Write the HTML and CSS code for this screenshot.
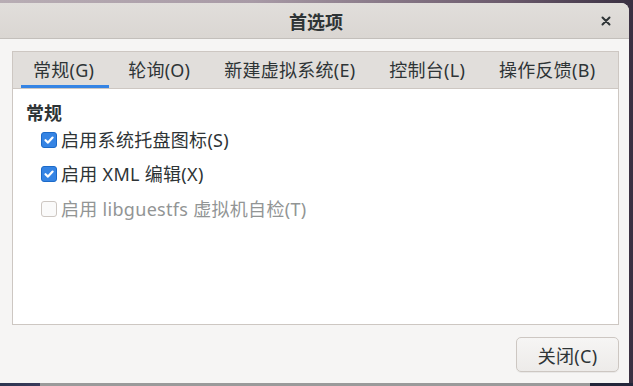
FILE: index.html
```html
<!DOCTYPE html>
<html lang="zh">
<head>
<meta charset="utf-8">
<title>首选项</title>
<link rel="stylesheet" href="styles.css">
</head>
<body>
<div class="desktop">
  <div class="dialog">
    <div class="titlebar">
      <span class="title">首选项</span>
      <span class="close" aria-label="关闭">
        <svg width="10" height="10" viewBox="0 0 10 10"><path d="M1.5 1.5 L8.5 8.5 M8.5 1.5 L1.5 8.5" stroke="#2e3436" stroke-width="2" stroke-linecap="round"/></svg>
      </span>
    </div>
    <div class="body">
      <div class="notebook">
        <div class="tabs">
          <div class="tab active">常规(G)</div>
          <div class="tab">轮询(O)</div>
          <div class="tab">新建虚拟系统(E)</div>
          <div class="tab">控制台(L)</div>
          <div class="tab">操作反馈(B)</div>
        </div>
        <div class="page">
          <div class="section-title">常规</div>
          <div class="option">
            <span class="check on"><svg width="12" height="12" viewBox="0 0 12 12"><path d="M2.5 6.2 L5 8.6 L9.6 3.6" fill="none" stroke="#fff" stroke-width="2.2" stroke-linecap="round" stroke-linejoin="round"/></svg></span>
            <span class="label">启用系统托盘图标(S)</span>
          </div>
          <div class="option">
            <span class="check on"><svg width="12" height="12" viewBox="0 0 12 12"><path d="M2.5 6.2 L5 8.6 L9.6 3.6" fill="none" stroke="#fff" stroke-width="2.2" stroke-linecap="round" stroke-linejoin="round"/></svg></span>
            <span class="label">启用 XML 编辑(X)</span>
          </div>
          <div class="option disabled">
            <span class="check off"></span>
            <span class="label">启用 libguestfs 虚拟机自检(T)</span>
          </div>
        </div>
      </div>
      <div class="actions">
        <button class="btn">关闭(C)</button>
      </div>
    </div>
  </div>
  <div class="bottom-strip"></div>
</div>
</body>
</html>
```

FILE: styles.css
```css
html, body {
  margin: 0;
  padding: 0;
}
body {
  width: 633px;
  height: 386px;
  overflow: hidden;
  font-family: "Noto Sans", "Noto Sans CJK SC", sans-serif;
  color: #2e3436;
}
.desktop {
  width: 633px;
  height: 386px;
  overflow: hidden;
  padding-top: 3px;
  box-sizing: border-box;
  background: linear-gradient(90deg, #b8adb4 0%, #a89aa6 40%, #6b5a6c 80%, #3a3042 100%);
}
.dialog {
  margin-left: -8px;
  width: 637px;
  height: 380px;
  border-radius: 8px 8px 0 0;
  background: #f6f5f4;
  display: flex;
  flex-direction: column;
  overflow: hidden;
}
.titlebar {
  height: 35px;
  flex: none;
  border-bottom: 1px solid #c3bfbb;
  background: linear-gradient(#e1dedb, #dad6d2);
  display: flex;
  align-items: center;
  justify-content: center;
  position: relative;
  padding-left: 11px;
}
.title {
  font-size: 18px;
  font-weight: 700;
  color: #2e3436;
}
.close {
  position: absolute;
  right: 18px;
  top: 13px;
  width: 10px;
  height: 10px;
  display: flex;
}
.body {
  flex: 1;
  display: flex;
  flex-direction: column;
  padding: 12px 10px 11px 20px;
}
.notebook {
  height: 272px;
  border: 1px solid #cdc7c2;
  background: #fff;
  display: flex;
  flex-direction: column;
}
.tabs {
  height: 36px;
  flex: none;
  background: #e1dedb;
  border-bottom: 1px solid #cdc7c2;
  display: flex;
  padding-left: 8px;
  gap: 7px;
}
.tab {
  font-size: 18px;
  letter-spacing: 0.25px;
  line-height: 36px;
  padding: 0 15px 0 12px;
  color: #2e3436;
  box-sizing: border-box;
  white-space: nowrap;
}
.tab.active {
  box-shadow: inset 0 -3px 0 #3584e4;
}
.page {
  flex: 1;
  padding: 13px 12px 0 13px;
}
.section-title {
  font-size: 18px;
  font-weight: 700;
  line-height: 22px;
  color: #2e3436;
}
.option {
  display: flex;
  align-items: center;
  height: 34px;
  padding-left: 15px;
}
.section-title + .option {
  margin-top: -1px;
}
.option.disabled {
  margin-top: 1px;
}
.check {
  width: 16px;
  height: 16px;
  box-sizing: border-box;
  border-radius: 3px;
  display: flex;
  align-items: center;
  justify-content: center;
  flex: none;
  margin-right: 4px;
}
.check.on {
  background: #3584e4;
  border: 1px solid #1c6ac8;
}
.check.off {
  background: #fafafa;
  border: 1px solid #cdc7c2;
}
.label {
  font-size: 18px;
  letter-spacing: 0.3px;
  line-height: 22px;
  color: #2e3436;
  white-space: nowrap;
}
.option.disabled .label {
  color: #929595;
}
.actions {
  flex: 1;
  display: flex;
  justify-content: flex-end;
  align-items: flex-end;
}
.btn {
  width: 103px;
  height: 35px;
  border: 1px solid #cdc7c2;
  border-radius: 5px;
  background: linear-gradient(#f6f5f4, #edebe9);
  box-shadow: 0 1px 0 rgba(0, 0, 0, 0.05);
  font-family: "Noto Sans", "Noto Sans CJK SC", sans-serif;
  font-size: 18px;
  letter-spacing: 0.3px;
  color: #2e3436;
  padding: 0;
}
.bottom-strip {
  height: 3px;
  background: linear-gradient(90deg, #2b3550 0px, #3a3a5a 40px, #9a9a9a 40px, #9a9a9a 590px, #23263a 590px);
}
```
